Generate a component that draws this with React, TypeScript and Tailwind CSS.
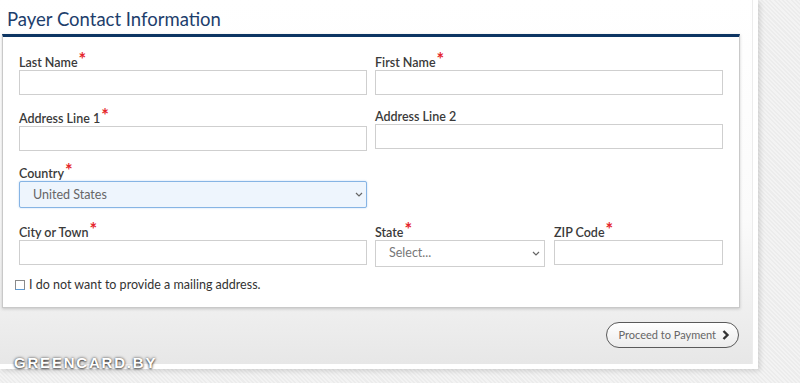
import React from 'react';

const font = { fontFamily: 'Lato, "Open Sans", Arial, sans-serif' };

const Star = () => <span className="text-[#e5262b] text-[18px] font-bold leading-[10px] align-top ml-[1px] relative top-[2px]">*</span>;

const Label = ({ text, req }: { text: string; req?: boolean }) => (
  <div className={`text-[12.5px] font-semibold text-[#3a3a3a] mb-[1px] ${req ? 'h-[17px] leading-[21px]' : 'h-[15px] leading-[17px]'}`}>
    {text}
    {req && <Star />}
  </div>
);

const Input = () => <div className="h-[25px] border border-[#cfcfcf] bg-white" />;

const Chevron = () => (
  <svg width="8" height="5" viewBox="0 0 8 5" fill="none" stroke="#666" strokeWidth="1.2">
    <path d="M1 1l3 3 3-3" />
  </svg>
);

export default function App() {
  return (
    <div
      className="w-[800px] h-[383px] overflow-hidden bg-[repeating-linear-gradient(45deg,#f3f3f3_0px,#f3f3f3_1.5px,#ececec_1.5px,#ececec_3px)] relative"
      style={font}
    >
      <div className="w-[758px] h-[369px] bg-white pr-[5px] pb-[5px] shadow-[2px_2px_5px_rgba(0,0,0,0.14)]">
        <div className="h-full flex flex-col bg-[linear-gradient(to_bottom,#ffffff_0%,#fbfbfb_60%,#f0f0f0_83%,#e7e7e7_100%)] border-r border-[#ececec]">
          <div className="h-[34px] pl-[7px] pt-[8px] text-[18.5px] leading-[22px] text-[#1d3e6c]">Payer Contact Information</div>
          <div className="ml-[2px] w-[738px] bg-white border border-[#c9c9c9] border-t-[3px] border-t-[#0d3563] shadow-[0_1px_3px_rgba(0,0,0,0.18)] px-[16px] pt-[15px] pb-[15px]">
            <div className="grid grid-cols-2 gap-x-[8px] items-start">
              <div><Label text="Last Name" req /><Input /></div>
              <div><Label text="First Name" req /><Input /></div>
            </div>
            <div className="grid grid-cols-2 gap-x-[8px] items-start mt-[13px]">
              <div><Label text="Address Line 1" req /><Input /></div>
              <div><Label text="Address Line 2" /><Input /></div>
            </div>
            <div className="grid grid-cols-2 gap-x-[8px] items-start mt-[12px]">
              <div>
                <Label text="Country" req />
                <div className="h-[27px] border border-[#86b4e4] bg-[#eef5fd] rounded-[2px] flex items-center justify-between pl-[13px] pr-[3px] shadow-[0_0_2px_rgba(80,150,230,0.4)]">
                  <span className="text-[12.5px] text-[#666] relative top-[1px]">United States</span>
                  <Chevron />
                </div>
              </div>
              <div />
            </div>
            <div className="grid grid-cols-2 gap-x-[8px] items-start mt-[14px]">
              <div><Label text="City or Town" req /><Input /></div>
              <div className="flex gap-x-[9px]">
                <div className="w-[170px]">
                  <Label text="State" req />
                  <div className="h-[27px] border border-[#cfcfcf] bg-white flex items-center justify-between pl-[13px] pr-[4px]">
                    <span className="text-[12.5px] text-[#777]">Select...</span>
                    <Chevron />
                  </div>
                </div>
                <div className="flex-1"><Label text="ZIP Code" req /><Input /></div>
              </div>
            </div>
            <div className="flex items-center mt-[11px] -ml-[4px]">
              <div className="w-[10px] h-[10px] border border-[#8a8a8a] border-b-[#5a9bd8] bg-white mr-[4px]" />
              <span className="text-[12.5px] leading-[14px] text-[#333]">I do not want to provide a mailing address.</span>
            </div>
          </div>
          <div className="flex justify-end mt-[14px] pr-[13px]">
            <button className="h-[26px] rounded-full border-[1.5px] border-[#5a5a5a] bg-[linear-gradient(to_bottom,#ffffff,#ececec)] pl-[11px] pr-[8px] flex items-center gap-[6px] text-[11px] text-[#666]">
              Proceed to Payment
              <svg width="8" height="10" viewBox="0 0 8 10">
                <path d="M1.5 1l4 4-4 4" fill="none" stroke="#333" strokeWidth="2.4" />
              </svg>
            </button>
          </div>
        </div>
      </div>
      <div className="absolute left-[14px] top-[352px] text-[15px] font-bold tracking-[1.8px] text-white [text-shadow:0_0_3px_rgba(0,0,0,0.7),0_1px_2px_rgba(0,0,0,0.6)]" style={{ fontFamily: '"Liberation Sans", Arial, sans-serif' }}>
        GREENCARD.BY
      </div>
    </div>
  );
}
